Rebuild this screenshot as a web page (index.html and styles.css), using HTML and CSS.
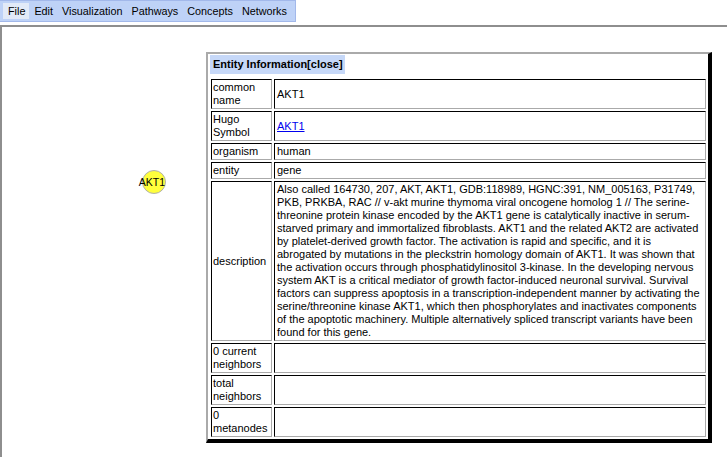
FILE: index.html
```html
<!DOCTYPE html>
<html>
<head>
<meta charset="utf-8">
<link rel="stylesheet" href="styles.css">
</head>
<body>
<nav class="menubar">
  <span class="menu-item active">File</span>
  <span class="menu-item">Edit</span>
  <span class="menu-item">Visualization</span>
  <span class="menu-item">Pathways</span>
  <span class="menu-item">Concepts</span>
  <span class="menu-item">Networks</span>
</nav>
<main class="canvas">
  <svg class="node" width="40" height="30" viewBox="0 0 40 30">
    <circle cx="20" cy="15" r="11.5" fill="#ffff3c" stroke="#b0b0b0" stroke-width="1"/>
    <text x="18" y="19" text-anchor="middle" class="node-label">AKT1</text>
  </svg>
  <section class="popup">
    <div class="popup-title">Entity Information[close]</div>
    <table class="info">
      <tr><td class="label">common name</td><td class="value">AKT1</td></tr>
      <tr><td class="label">Hugo Symbol</td><td class="value"><a href="#">AKT1</a></td></tr>
      <tr><td class="label">organism</td><td class="value">human</td></tr>
      <tr><td class="label">entity</td><td class="value">gene</td></tr>
      <tr><td class="label">description</td><td class="value desc">Also called 164730, 207, AKT, AKT1, GDB:118989, HGNC:391, NM_005163, P31749,<br>PKB, PRKBA, RAC // v-akt murine thymoma viral oncogene homolog 1 // The serine-<br>threonine protein kinase encoded by the AKT1 gene is catalytically inactive in serum-<br>starved primary and immortalized fibroblasts. AKT1 and the related AKT2 are activated<br>by platelet-derived growth factor. The activation is rapid and specific, and it is<br>abrogated by mutations in the pleckstrin homology domain of AKT1. It was shown that<br>the activation occurs through phosphatidylinositol 3-kinase. In the developing nervous<br>system AKT is a critical mediator of growth factor-induced neuronal survival. Survival<br>factors can suppress apoptosis in a transcription-independent manner by activating the<br>serine/threonine kinase AKT1, which then phosphorylates and inactivates components<br>of the apoptotic machinery. Multiple alternatively spliced transcript variants have been<br>found for this gene.</td></tr>
      <tr><td class="label">0 current neighbors</td><td class="value"></td></tr>
      <tr><td class="label">total neighbors</td><td class="value"></td></tr>
      <tr><td class="label">0 metanodes</td><td class="value"></td></tr>
    </table>
  </section>
</main>
</body>
</html>
```
FILE: styles.css
```css
html, body {
  margin: 0;
  padding: 0;
  background: #fff;
  font-family: "Liberation Sans", Arial, sans-serif;
  color: #000;
}
.menubar {
  display: inline-flex;
  align-items: center;
  height: 20px;
  padding: 0 4px 0 3px;
  background: #bed2f7;
  border: 1px solid #a2b8ea;
  border-left: none;
  font-size: 10.8px;
}
.menu-item {
  padding: 2px 4px 2px 5px;
  line-height: 12px;
}
.menu-item.active {
  background: #e2eaf8;
}
.canvas {
  position: relative;
  margin-top: 3px;
  height: 432px;
  border-top: 2px solid #8e8e8e;
  border-left: 2px solid #8e8e8e;
}
.node {
  position: absolute;
  left: 132px;
  top: 140px;
  overflow: visible;
}
.node-label {
  font-family: "Liberation Sans", Arial, sans-serif;
  font-size: 10.5px;
  fill: #000;
}
.popup {
  position: absolute;
  left: 204px;
  top: 25px;
  width: 499px;
  padding: 1px 0 0 1px;
  background: #fff;
  border-top: 2px solid #aaa;
  border-left: 2px solid #aaa;
  border-right: 4px solid #000;
  border-bottom: 4px solid #000;
  font-size: 11px;
}
.popup-title {
  display: inline-block;
  margin-left: 1px;
  padding: 3px 2px 3px 3px;
  line-height: 13px;
  background: #c6d8f8;
  font-weight: bold;
}
.info {
  width: 100%;
  margin-top: 3px;
  border-spacing: 2px;
}
.info td {
  padding: 1px;
  line-height: 13px;
  border-top: 1px solid #000;
  border-left: 1px solid #000;
  border-right: 1px solid #aaa;
  border-bottom: 1px solid #aaa;
  vertical-align: middle;
}
.info td.label {
  width: 57px;
  padding-left: 1px;
}
.info td.value {
  padding-left: 2px;
}
.info td.desc {
  white-space: nowrap;
}
.info a {
  color: #0000ee;
}
```
